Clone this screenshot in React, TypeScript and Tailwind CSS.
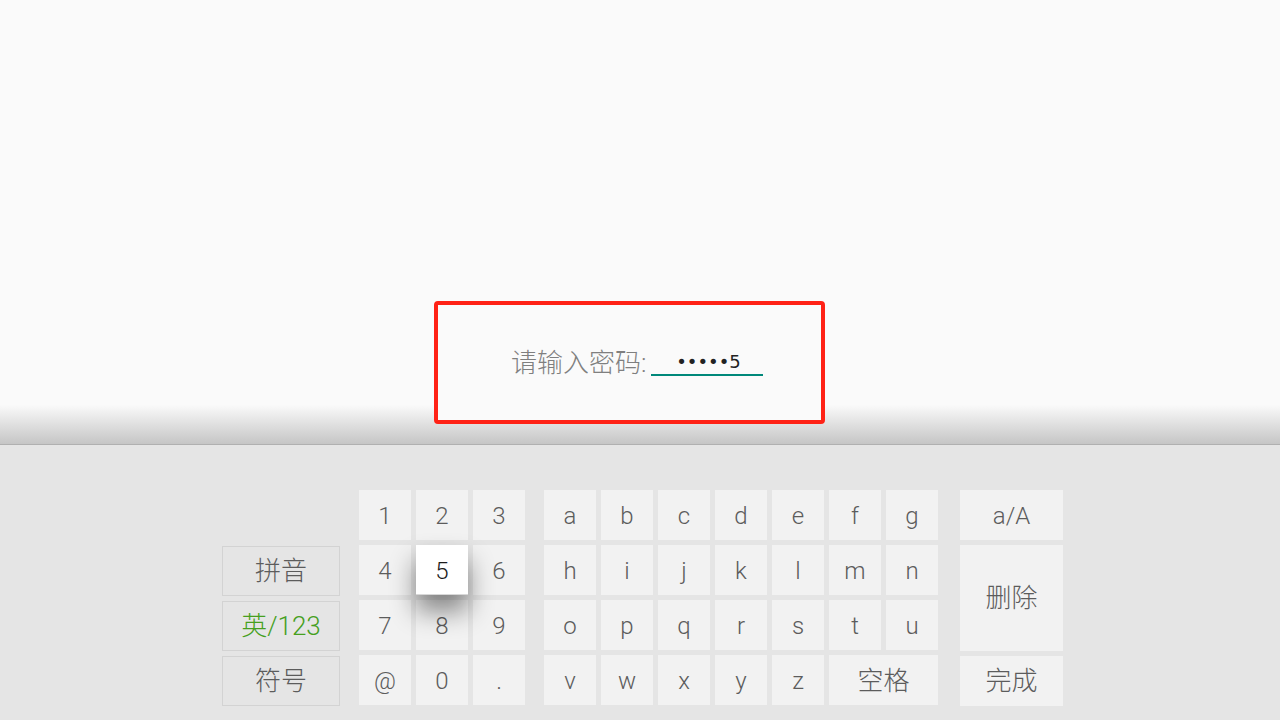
import React from 'react';

const numberKeys = ['1', '2', '3', '4', '5', '6', '7', '8', '9', '@', '0', '.'];
const letterKeys = 'abcdefghijklmnopqrstuvwxyz'.split('');

const keyFont = { fontFamily: 'Roboto, "Noto Sans CJK SC", sans-serif' };

function Key({ label, active, wide }: { label: string; active?: boolean; wide?: boolean }) {
  return (
    <div
      className={`h-[50px] flex items-center justify-center pt-[2px] text-[24px] leading-none ${
        wide ? 'col-span-2 text-[26px]' : ''
      } ${
        active
          ? 'relative z-10 bg-white text-[#1c1c1c] shadow-[0_16px_26px_rgba(0,0,0,0.45)] border-b border-[#d8d8d8]'
          : 'bg-[#f2f2f2] text-[#5c5c5c]'
      }`}
    >
      {label}
    </div>
  );
}

export default function App() {
  return (
    <div className="h-screen w-full overflow-hidden flex flex-col font-light" style={keyFont}>
      {/* Top area with password box */}
      <div className="h-[445px] shrink-0 flex flex-col bg-[linear-gradient(to_bottom,#fafafa_0px,#fafafa_405px,#c4c4c4_445px)] border-b border-[#b0b0b0]">
        <div className="pt-[301px] pl-[434px]">
          <div className="w-[391px] h-[123px] border-4 border-[#ff2216] rounded-[4px] bg-[#fafafa] flex items-center pl-[73px]">
            <div className="flex items-end">
              <span className="text-[26px] leading-[30px] text-[#7f7f7f]">请输入密码:</span>
              <div className="ml-[5px] w-[112px] h-[26px] border-b-2 border-[#00887a] flex items-center justify-center mb-[2px]">
                <span
                  className="text-[18px] leading-none text-[#222] font-normal pl-[2px]"
                  style={{ fontFamily: '"DejaVu Sans", sans-serif' }}
                >
                  •••••5
                </span>
              </div>
            </div>
          </div>
        </div>
      </div>

      {/* Keyboard */}
      <div className="flex-1 bg-[#e5e5e5] flex pl-[222px] pt-[45px]">
        {/* Mode switch column */}
        <div className="w-[118px] flex flex-col gap-[5px] mt-[56px]">
          <div className="h-[50px] border border-[#d3d3d3] flex items-center justify-center text-[26px] text-[#5c5c5c]">
            拼音
          </div>
          <div className="h-[50px] border border-[#d3d3d3] flex items-center justify-center text-[26px] text-[#46a01e]">
            英/123
          </div>
          <div className="h-[50px] border border-[#d3d3d3] flex items-center justify-center text-[26px] text-[#5c5c5c]">
            符号
          </div>
        </div>

        {/* Number keys */}
        <div className="ml-[19px] grid grid-cols-[repeat(3,52px)] gap-[5px] content-start">
          {numberKeys.map((k) => (
            <Key key={k} label={k} active={k === '5'} />
          ))}
        </div>

        {/* Letter keys */}
        <div className="ml-[19px] grid grid-cols-[repeat(7,52px)] gap-[5px] content-start">
          {letterKeys.map((k) => (
            <Key key={k} label={k} />
          ))}
          <Key label="空格" wide />
        </div>

        {/* Action column */}
        <div className="ml-[22px] w-[103px] flex flex-col gap-[5px]">
          <div className="h-[50px] bg-[#f2f2f2] flex items-center justify-center pt-[2px] text-[24px] text-[#5c5c5c]">a/A</div>
          <div className="h-[106px] bg-[#f2f2f2] flex items-center justify-center text-[26px] text-[#5c5c5c]">删除</div>
          <div className="h-[50px] bg-[#f2f2f2] flex items-center justify-center text-[26px] text-[#5c5c5c]">完成</div>
        </div>
      </div>
    </div>
  );
}
